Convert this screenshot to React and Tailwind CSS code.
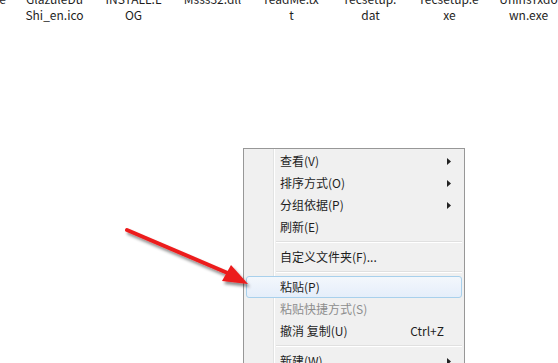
import React from 'react';

const files = [
  ['e', ''],
  ['GlazuleDu', 'Shi_en.ico'],
  ['INSTALL.L', 'OG'],
  ['Msss32.dll', ''],
  ['readMe.tx', 't'],
  ['recsetup.', 'dat'],
  ['recsetup.e', 'xe'],
  ['UninsYxdo', 'wn.exe'],
];

const menu = [
  { label: '查看(V)', sub: true },
  { label: '排序方式(O)', sub: true },
  { label: '分组依据(P)', sub: true },
  { label: '刷新(E)' },
  { sep: true },
  { label: '自定义文件夹(F)...' },
  { sep: true },
  { label: '粘贴(P)', hot: true },
  { label: '粘贴快捷方式(S)', disabled: true },
  { label: '撤消 复制(U)', key: 'Ctrl+Z' },
  { sep: true },
  { label: '新建(W)', sub: true },
];

const SubArrow = () => (
  <svg width="4" height="7" viewBox="0 0 4 7" className="mr-[10px]">
    <path d="M0 0 L4 3.5 L0 7 Z" fill="#222" />
  </svg>
);

const App = () => {
  return (
    <div
      className="relative w-[558px] h-[363px] overflow-hidden bg-white text-[12px] text-[#1e1e1e]"
      style={{ fontFamily: '"Noto Sans CJK SC", "Noto Sans", sans-serif' }}
    >
      {/* file labels strip */}
      <div className="flex ml-[-29px] mt-[-9px]">
        {files.map((f, i) => (
          <div
            key={i}
            className={`shrink-0 leading-4 ${i === 0 ? 'w-[44px] pr-[9px] text-right' : 'w-[79px] text-center'}`}
          >
            <div>{f[0] || '\u00a0'}</div>
            <div>{f[1] || '\u00a0'}</div>
          </div>
        ))}
      </div>

      {/* context menu */}
      <div className="absolute left-[243px] top-[148px] w-[222px] bg-[#f0f0f0] border border-[#979797] py-[1px] px-[2px]">
        <div className="absolute left-[29px] top-0 bottom-0 w-[1px] bg-[#e2e3e3]" />
        <div className="absolute left-[30px] top-0 bottom-0 w-[1px] bg-white" />
        {menu.map((m, i) =>
          m.sep ? (
            <div key={i} className="h-[8px] flex flex-col justify-center pl-[30px]">
              <div className="h-[1px] bg-[#e0e0e0]" />
              <div className="h-[1px] bg-white" />
            </div>
          ) : (
            <div
              key={i}
              className={`relative h-[22px] flex items-center justify-between pl-[33px] rounded-[3px] border ${
                m.hot
                  ? 'border-[#a8d0ec] bg-gradient-to-b from-[#f3f7fc] to-[#e5eefa]'
                  : 'border-transparent'
              } ${m.disabled ? 'text-[#8d8d8d]' : 'text-[#1e1e1e]'}`}
            >
              <span>{m.label}</span>
              {m.sub && <SubArrow />}
              {m.key && <span className="mr-[17px]">{m.key}</span>}
            </div>
          )
        )}
      </div>

      {/* red arrow */}
      <svg className="absolute inset-0 pointer-events-none" width="558" height="363">
        <defs>
          <filter id="sh" x="-20%" y="-20%" width="140%" height="140%">
            <feDropShadow dx="2" dy="3" stdDeviation="1.5" floodColor="#000" floodOpacity="0.45" />
          </filter>
        </defs>
        <g filter="url(#sh)">
          <line x1="127" y1="230" x2="230" y2="274" stroke="#ec1c1c" strokeWidth="4" strokeLinecap="round" />
          <polygon points="248,284 222,281 231,265" fill="#ec1c1c" />
        </g>
      </svg>
    </div>
  );
};

export default App;
